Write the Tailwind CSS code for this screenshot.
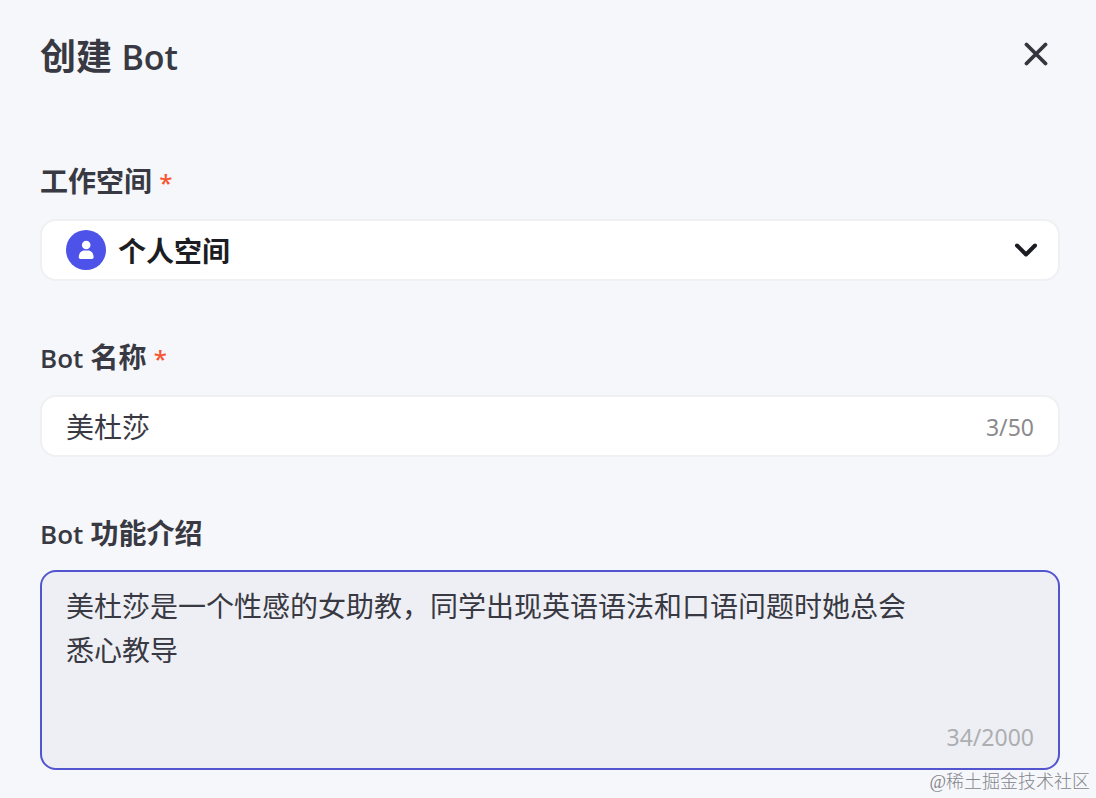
<!DOCTYPE html>
<html lang="zh-CN">
<head>
<meta charset="utf-8">
<meta name="viewport" content="width=device-width, initial-scale=1">
<title>创建 Bot</title>
<script src="https://cdn.jsdelivr.net/npm/@tailwindcss/browser@4"></script>
</head>
<body class="relative min-h-screen bg-[#f5f7fb] font-['Noto_Sans','Noto_Sans_CJK_SC',sans-serif] text-[#383942]">
<main class="pt-7 pr-9 pb-7 pl-10">
  <header class="flex h-14 items-center justify-between">
    <h1 class="pt-[2px] text-[36px] leading-[56px] font-bold"><span>创建</span> <span class="font-['Open_Sans'] text-[34px] font-semibold">Bot</span></h1>
    <button type="button" aria-label="关闭" class="flex size-12 items-center justify-center">
      <svg class="mb-1 size-6" viewBox="0 0 24 24" fill="none" stroke="#34353d" stroke-width="3.800" stroke-linecap="round" aria-hidden="true"><path d="M2.500 2.500 21.500 21.500M21.500 2.500 2.500 21.500"/></svg>
    </button>
  </header>
  <form class="mt-[75px] flex flex-col gap-[54px]">
    <div class="flex flex-col gap-4">
      <label for="space" class="h-11 text-[28px] leading-[44px] font-bold">工作空间 <span class="text-[24px] font-medium text-[#f9542f]">*</span></label>
      <div class="relative">
        <select id="space" class="h-[62px] w-full appearance-none rounded-2xl border-2 border-[#eff0f2] bg-white pt-[2px] pr-16 pl-[76px] text-[28px] font-bold text-[#1c1d23]"><option>个人空间</option></select>
        <svg class="pointer-events-none absolute top-[11px] left-[26px] size-10" viewBox="0 0 40 40" aria-hidden="true"><circle cx="20" cy="20" r="20" fill="#4d53e8"/><circle cx="20.200" cy="15" r="4.300" fill="#fff"/><path d="M12.800 27.200c0-4 2.400-6.800 5.400-6.800h4c3 0 5.400 2.800 5.400 6.800q0 1.800-1.700 1.800h-11.400q-1.700 0-1.700-1.800Z" fill="#fff"/></svg>
        <svg class="pointer-events-none absolute top-[19px] right-[22px] size-6" viewBox="0 0 24 24" fill="none" stroke="#1c1d23" stroke-width="4" stroke-linecap="round" stroke-linejoin="round" aria-hidden="true"><path d="m3 7.500 9 9 9-9"/></svg>
      </div>
    </div>
    <div class="flex flex-col gap-4">
      <label for="name" class="h-11 text-[28px] leading-[44px] font-bold"><span class="font-['Open_Sans'] text-[26px] font-semibold">Bot</span> 名称 <span class="text-[24px] font-medium text-[#f9542f]">*</span></label>
      <div class="flex h-[62px] items-center rounded-2xl border-2 border-[#eff0f2] bg-white px-6 pt-[2px]">
        <input id="name" type="text" maxlength="50" value="美杜莎" class="min-w-0 flex-1 bg-transparent text-[28px] outline-none">
        <span class="text-[23px] text-[#8b8b8d]">3/50</span>
      </div>
    </div>
    <div class="flex flex-col gap-[15px]">
      <label for="intro" class="h-11 text-[28px] leading-[44px] font-bold"><span class="font-['Open_Sans'] text-[26px] font-semibold">Bot</span> 功能介绍</label>
      <div class="flex flex-col rounded-2xl border-2 border-[#5355cf] bg-[#eeeff4] py-3">
        <textarea id="intro" maxlength="2000" class="h-[134px] w-full resize-none bg-transparent pr-32 pl-6 text-[28px] leading-[44px] outline-none">美杜莎是一个性感的女助教，同学出现英语语法和口语问题时她总会悉心教导</textarea>
        <span class="self-end pr-6 text-[23px] leading-[38px] text-[#adaeb2]">34/2000</span>
      </div>
    </div>
  </form>
</main>
<p class="absolute right-[6px] bottom-0 font-['Liberation_Serif','Noto_Sans_CJK_SC',serif] text-[18px] leading-[32px] font-light text-[#85868b]">@稀土掘金技术社区</p>
</body>
</html>
